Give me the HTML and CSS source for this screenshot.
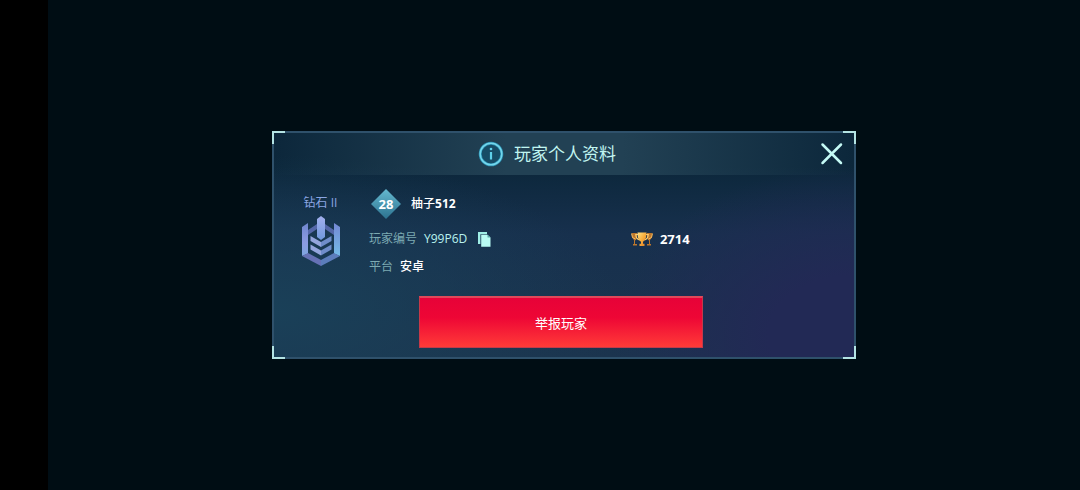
FILE: index.html
```html
<!DOCTYPE html>
<html lang="zh-CN">
<head>
<meta charset="utf-8">
<meta name="viewport" content="width=device-width, initial-scale=1">
<title>玩家个人资料</title>
<link rel="stylesheet" href="styles.css">
</head>
<body>
<main class="stage">
  <section class="panel" role="dialog" aria-labelledby="panel-title">
    <i class="corner corner-tl"></i><i class="corner corner-tr"></i><i class="corner corner-bl"></i><i class="corner corner-br"></i>
    <header class="panel-header">
      <div class="heading">
        <svg class="info-icon" viewBox="0 0 26 26" aria-hidden="true">
          <circle cx="13" cy="13" r="10.800" fill="#174c66" stroke="#2a8fb0" stroke-width="3"/>
          <circle cx="13" cy="13" r="10.800" fill="none" stroke="#74d6ec" stroke-width="1.500"/>
          <path d="M13 11v7.500" stroke="#5fd0ea" stroke-width="2.200"/>
          <circle cx="13" cy="8" r="1.300" fill="#5fd0ea"/>
        </svg>
        <h1 class="title" id="panel-title">玩家个人资料</h1>
      </div>
      <button class="close" type="button" aria-label="关闭">
        <svg class="close-icon" viewBox="0 0 24 24" aria-hidden="true"><path d="M2.500 2.500l18.500 18.500M21 2.500L2.500 21" stroke="#c5fbf6" stroke-width="2.500" stroke-linecap="round"/></svg>
      </button>
    </header>
    <div class="profile">
      <div class="rank">
        <span class="rank-name">钻石 II</span>
        <svg class="rank-icon" viewBox="0 0 38 50" aria-hidden="true">
          <defs>
            <linearGradient id="left" x1="0" y1="0" x2="0" y2="1"><stop offset="0" stop-color="#7086cf"/><stop offset=".6" stop-color="#8c9be2"/><stop offset="1" stop-color="#7fa6e0"/></linearGradient>
            <linearGradient id="right" x1="0" y1="0" x2="0" y2="1"><stop offset="0" stop-color="#7488d4"/><stop offset="1" stop-color="#74bce8"/></linearGradient>
            <linearGradient id="blade" x1="0" y1="0" x2="0" y2="1"><stop offset="0" stop-color="#a3b0ee"/><stop offset="1" stop-color="#6f98dc"/></linearGradient>
          </defs>
          <path d="M6 14l9-6v5l-9 6zM32 14l-9-6v5l9 6z" fill="#5467a8"/>
          <path d="M0 11l6-4v30.500L0 40z" fill="url(#left)"/>
          <path d="M38 11l-6-4v30.500l6 2.500z" fill="url(#right)"/>
          <path d="M0 40l6-3 13 7v6z" fill="#6671b5"/>
          <path d="M38 40l-6-3-13 7v6z" fill="#5c7dbb"/>
          <path d="M15 3l4-3 4 3v18l-4 3-4-3z" fill="url(#blade)"/>
          <path d="M8.500 20L19 26v5L8.500 25zM8.500 28.500L19 34.500v5L8.500 33.500z" fill="#94a5dd"/>
          <path d="M29.500 20L19 26v5l10.500-6zM29.500 28.500L19 34.500v5l10.500-6z" fill="#6f8dca"/>
        </svg>
      </div>
      <div class="details">
        <div class="player">
          <span class="level">28</span>
          <strong class="value">柚子<b>512</b></strong>
        </div>
        <div class="field">
          <span class="label">玩家编号</span>
          <span class="code">Y99P6D</span>
          <button class="copy" type="button" aria-label="复制玩家编号">
            <svg class="copy-icon" viewBox="0 0 13 15" aria-hidden="true"><path d="M0 0h9v2.200H2.400V12H0z" fill="#9feee6"/><path d="M3.200 2.800H9.500L12.500 5.500V14.800H3.200z" fill="#b9fcf4"/><path d="M9.500 2.800v2.700h3z" fill="#5daaaa"/></svg>
          </button>
        </div>
        <div class="trophies">
          <svg class="trophy-icon" viewBox="0 0 22 14" role="img" aria-label="奖杯">
            <defs><linearGradient id="gold" x1="0" y1="0" x2="1" y2="1"><stop offset="0" stop-color="#ffe184"/><stop offset=".5" stop-color="#f7ae3d"/><stop offset="1" stop-color="#d97824"/></linearGradient></defs>
            <path d="M1 1h5v4c0 2-.8 3-2 3.500V12h2v1.500H2V12h1V8L1 5.500zM21 1h-5v4c0 2 .8 3 2 3.500V12h-2v1.500h4V12h-1V8l2-2.500z" fill="#bd772c"/>
            <path d="M.5 1.500l1 4 3 1.500M21.500 1.500l-1 4-3 1.500" fill="none" stroke="#f5bd60" stroke-width="1"/>
            <path d="M7 2.500H4.800C5 6 6.500 7.500 8.500 8M15 2.500h2.200C17 6 15.500 7.500 13.500 8" fill="none" stroke="#ffd071" stroke-width="1.200"/>
            <path d="M6.500.5h9c0 5-1 8-3.500 9.300v2h1.500V14h-5v-2.200H10v-2C7.500 8.500 6.500 5.500 6.500.5z" fill="url(#gold)"/>
          </svg>
          <strong class="count">2714</strong>
        </div>
        <div class="field">
          <span class="label">平台</span>
          <strong class="value">安卓</strong>
        </div>
      </div>
    </div>
    <div class="actions"><button class="report" type="button">举报玩家</button></div>
  </section>
</main>
</body>
</html>
```

FILE: styles.css
```css
* { box-sizing: border-box; }

body {
  margin: 0;
  min-height: 100vh;
  padding-left: 48px;
  background: #000;
  color: #fff;
  font: 13px/20px "Open Sans", "Noto Sans CJK SC", sans-serif;
}

button {
  border: 0;
  padding: 0;
  background: none;
  color: inherit;
  font: inherit;
  cursor: pointer;
}

svg { display: block; flex: none; }

.stage {
  min-height: 100vh;
  display: flex;
  align-items: center;
  justify-content: center;
  background: #000d14;
}

.panel {
  position: relative;
  width: 100%;
  max-width: 584px;
  border: 2px solid #2f516b;
  background:
    radial-gradient(ellipse 42% 75% at 100% 90%, #222955 35%, #22295500 100%),
    radial-gradient(ellipse 60% 70% at 0% 80%, #1a4058, #1a405800 100%),
    linear-gradient(#0c273b 15%, #17304d 45%, #1b344e);
}

.corner {
  position: absolute;
  width: 13px;
  height: 13px;
  border: 0 solid #b4e4e4;
}
.corner-tl { top: -2px; left: -2px; border-width: 2px 0 0 2px; }
.corner-tr { top: -2px; right: -2px; border-width: 2px 2px 0 0; }
.corner-bl { bottom: -2px; left: -2px; border-width: 0 0 2px 2px; }
.corner-br { bottom: -2px; right: -2px; border-width: 0 2px 2px 0; }

.panel-header {
  display: flex;
  align-items: center;
  height: 42px;
  background: linear-gradient(90deg, #22415400, #224154 40%, #224154 60%, #22415400);
}

.heading {
  flex: 1;
  display: flex;
  align-items: center;
  justify-content: center;
  gap: 10px;
}
.info-icon { width: 26px; height: 26px; }
.title {
  margin: 0;
  color: #c1f5f1;
  font-size: 17px;
  font-weight: 400;
  line-height: 24px;
}
.close { padding-right: 10px; }
.close-icon { width: 24px; height: 24px; }

.profile {
  display: grid;
  grid-template-columns: 95px 1fr;
  padding-top: 14px;
}

.rank {
  display: flex;
  flex-direction: column;
  align-items: center;
  gap: 3px;
  padding: 4px 2px 0 0;
}
.rank-name { color: #8ba6e4; font-size: 12px; }
.rank-icon { width: 38px; height: 50px; }

.details {
  display: grid;
  grid-template-columns: 54% 1fr;
  grid-template-rows: 36px 28px 28px;
  align-items: center;
}

.player {
  grid-column: 1 / -1;
  align-self: start;
  display: flex;
  align-items: center;
  gap: 10px;
  padding-left: 2px;
}
.level {
  display: grid;
  place-items: center;
  width: 30px;
  height: 30px;
  background: linear-gradient(#65b9d0, #2c728f);
  clip-path: polygon(50% 0, 100% 50%, 50% 100%, 0 50%);
  font-weight: 700;
}
.value { font-size: 12px; font-weight: 500; }
.value b, .count { font-weight: 700; }

.field, .trophies { display: flex; align-items: center; gap: 7px; }
.label { color: #7daab2; font-size: 12px; }
.code { color: #b9f3ef; font-size: 12px; font-weight: 500; }
.copy { padding-left: 4px; }
.copy-icon { width: 13px; height: 15px; }
.trophy-icon { width: 22px; height: 14px; }

.actions {
  display: flex;
  justify-content: center;
  padding: 15px 6px 9px 0;
}
.report {
  width: 284px;
  height: 52px;
  border: 1px solid #c43a49;
  border-top: 2px solid #e0485a;
  background: linear-gradient(#e70238, #ee0635 40%, #ff3b38);
}
```
